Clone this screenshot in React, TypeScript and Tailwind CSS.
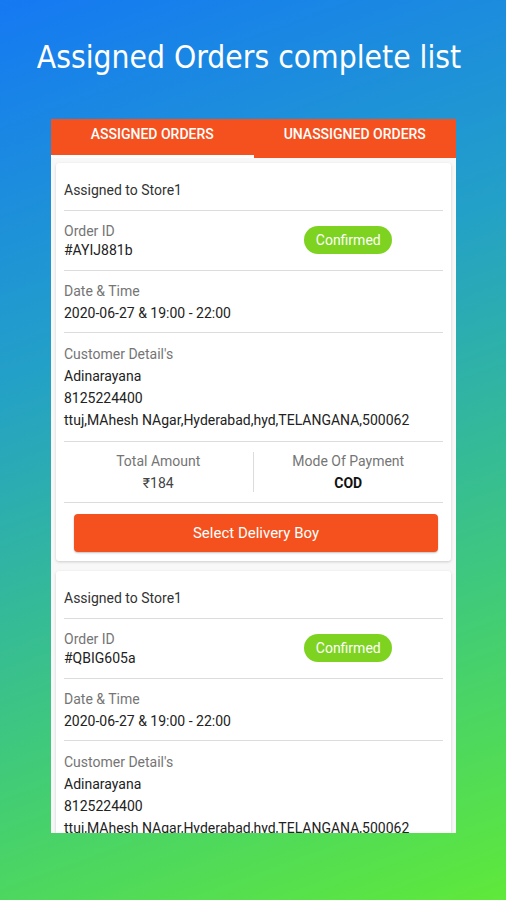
import React from "react";

const Label = ({ children }: { children: React.ReactNode }) => (
  <div className="text-[14px] leading-[18px] text-[#757575]">{children}</div>
);
const Value = ({ children, className = "" }: { children: React.ReactNode; className?: string }) => (
  <div className={"text-[14px] leading-[18px] text-[#222222] " + className}>{children}</div>
);

function OrderCard({ id, full }: { id: string; full: boolean }) {
  return (
    <div className="bg-white rounded-[3px] shadow-[0_1px_3px_rgba(0,0,0,0.18)] px-[8px]">
      <div className="pt-[18px] pb-[11px] border-b border-[#dcdcdc]">
        <Value className="text-[#333333]">Assigned to Store1</Value>
      </div>
      <div className="pt-[11px] pb-[11px] border-b border-[#dcdcdc] flex">
        <div className="w-1/2">
          <Label>Order ID</Label>
          <Value className="mt-[1px]">{id}</Value>
        </div>
        <div className="w-1/2 flex justify-center items-start pt-[4px]">
          <div className="w-[88px] h-[28px] rounded-full bg-[#7ed321] text-white text-[14px] flex items-center justify-center">
            Confirmed
          </div>
        </div>
      </div>
      <div className="pt-[11px] pb-[10px] border-b border-[#dcdcdc]">
        <Label>Date &amp; Time</Label>
        <Value className="mt-[4px]">2020-06-27 &amp; 19:00 - 22:00</Value>
      </div>
      <div className={"pt-[12px] pb-[12px] " + (full ? "border-b border-[#dcdcdc]" : "")}>
        <Label>Customer Detail's</Label>
        <Value className="mt-[4px]">Adinarayana</Value>
        <Value className="mt-[4px]">8125224400</Value>
        <Value className="mt-[4px]">ttuj,MAhesh NAgar,Hyderabad,hyd,TELANGANA,500062</Value>
      </div>
      {full && (
        <>
          <div className="flex border-b border-[#dcdcdc] py-[10px]">
            <div className="w-1/2 text-center border-r border-[#dcdcdc]">
              <Label>Total Amount</Label>
              <div className="mt-[4px] text-[14px] leading-[18px] text-[#444444]">₹184</div>
            </div>
            <div className="w-1/2 text-center">
              <Label>Mode Of Payment</Label>
              <div className="mt-[4px] text-[14px] leading-[18px] text-[#111111] font-bold">COD</div>
            </div>
          </div>
          <div className="pt-[11px] pb-[9px] pl-[10px] pr-[5px]">
            <div className="h-[38px] rounded-[4px] bg-[#f4511e] text-white text-[15px] flex items-center justify-center shadow-[0_1px_2px_rgba(0,0,0,0.25)]">
              Select Delivery Boy
            </div>
          </div>
        </>
      )}
    </div>
  );
}

export default function App() {
  return (
    <div className="w-[506px] h-[900px] overflow-hidden bg-[linear-gradient(160deg,#1579f3_0%,#23a0c8_35%,#3fc97c_70%,#5fe93a_100%)]">
      <h1 className="pt-[39px] pr-[8px] h-[119px] text-center text-white text-[31.5px] leading-[36px] [font-stretch:condensed] font-['DejaVu_Sans_Condensed','DejaVu_Sans',sans-serif]">
        Assigned Orders complete list
      </h1>
      <div className="ml-[51px] w-[405px] h-[714px] bg-[#f8f8f8] overflow-hidden font-['Roboto',sans-serif]">
        <div className="h-[39px] bg-[#f4511e] flex text-white text-[14px] font-medium">
          <div className="w-1/2 pt-[5px] text-center border-b-[3px] border-white">ASSIGNED ORDERS</div>
          <div className="w-1/2 pt-[5px] text-center">UNASSIGNED ORDERS</div>
        </div>
        <div className="px-[5px] pt-[5px] flex flex-col gap-[10px]">
          <OrderCard id="#AYIJ881b" full />
          <OrderCard id="#QBIG605a" full={false} />
        </div>
      </div>
    </div>
  );
}
